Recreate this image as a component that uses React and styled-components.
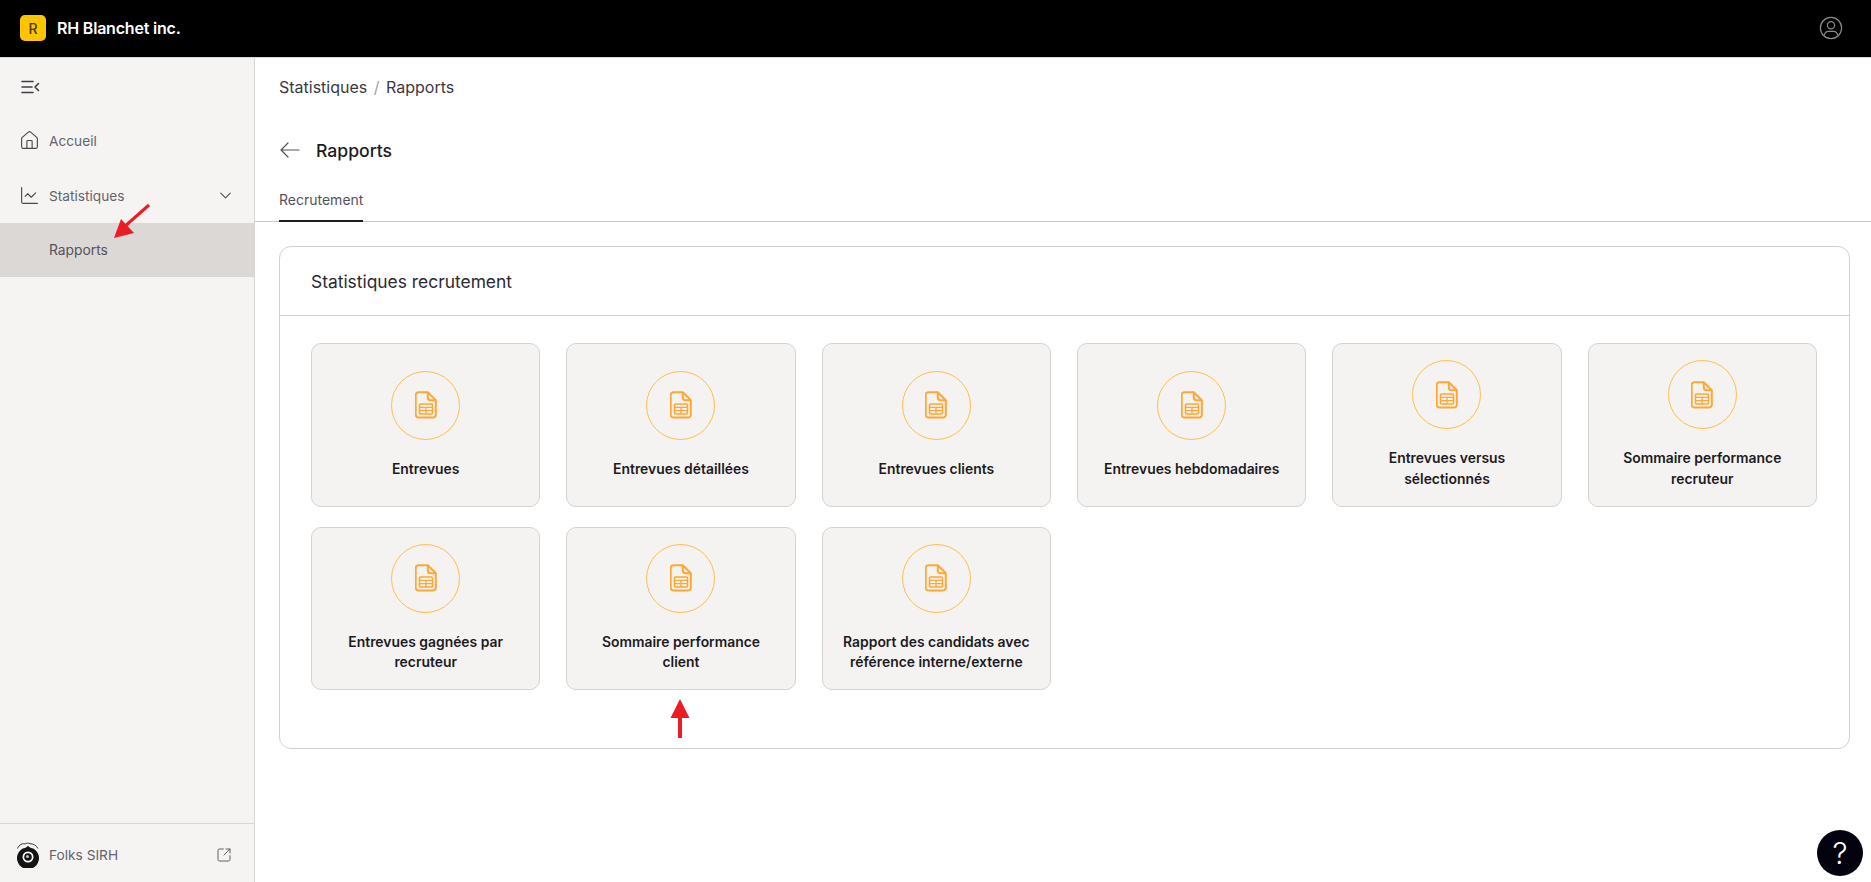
import React from "react";
import styled, { createGlobalStyle } from "styled-components";
import { House, ChartLine, ChevronDown, SquareArrowOutUpRight } from "lucide-react";

const Global = createGlobalStyle`
  html, body { margin: 0; padding: 0; height: 100%; background: #fff; }
  body { font-family: Inter, "Liberation Sans", sans-serif; color: #1d1b22; overflow: hidden; }
  * { box-sizing: border-box; }
`;
const Shell = styled.div`position: relative; display: flex; flex-direction: column; width: 1871px; height: 882px;`;
const TopBar = styled.header`
  height: 58px; flex: none; background: #000; border-bottom: 1px solid #d9d6d3;
  display: flex; align-items: center; justify-content: space-between; padding: 0 28px 1px 20px;
`;
const Brand = styled.div`display: flex; align-items: center; gap: 11px; color: #fff; font-size: 16px; font-weight: 600; letter-spacing: -0.2px;`;
const BrandMark = styled.div`
  width: 26px; height: 26px; border-radius: 5px; background: #fdc400; color: #4d3b00;
  display: flex; align-items: center; justify-content: center; font-size: 14px; font-weight: 500;
`;
const Body = styled.div`flex: 1; display: flex; min-height: 0;`;
const Sidebar = styled.aside`
  width: 255px; flex: none; background: #f5f4f2; border-right: 1px solid #d9d6d3;
  display: flex; flex-direction: column;
`;
const Collapse = styled.div`height: 55px; padding: 22px 0 0 21px; color: #3f3d44; svg { display: block; }`;
const NavList = styled.nav`flex: 1; display: flex; flex-direction: column;`;
const NavItem = styled.div`
  height: 55px; display: flex; align-items: center; padding: 0 19px 0 19px; gap: 9px;
  font-size: 13.7px; color: #66636b; svg { flex: none; }
`;
const NavLabel = styled.span`flex: 1;`;
const SubItem = styled.div`
  height: 54px; background: #dcd8d5; display: flex; align-items: center;
  padding-left: 49px; font-size: 13.8px; color: #55525a;
`;
const Foot = styled.div`
  height: 59px; flex: none; border-top: 1px solid #d9d6d3; display: flex; align-items: center;
  padding: 4px 22px 0 16px; gap: 9px; font-size: 13.7px; color: #66636b;
`;
const Main = styled.main`flex: 1; min-width: 0; display: flex; flex-direction: column;`;
const Crumbs = styled.div`
  height: 57px; flex: none; padding: 0 0 0 24px; display: flex; align-items: center; gap: 6.5px;
  font-size: 16px; color: #3b3940;
`;
const CrumbSep = styled.span`color: #a5a2a8;`;
const TitleRow = styled.div`
  height: 68px; flex: none; padding: 2px 24px 0 25px; display: flex; align-items: center; gap: 16px;
  font-size: 17.6px; font-weight: 500; color: #1d1b22; svg { flex: none; }
`;
const Tabs = styled.div`height: 39px; flex: none; padding: 0 24px; border-bottom: 1px solid #c9c6c4; display: flex;`;
const Tab = styled.div`
  height: 39px; display: flex; align-items: center; font-size: 14px; color: #55525a;
  border-bottom: 2px solid #1d1b22; padding-bottom: 4px;
`;
const Content = styled.div`padding: 24px 21px 0 24px;`;
const Panel = styled.section`border: 1px solid #d3d0ce; border-radius: 12px; background: #fff; height: 503px;`;
const PanelHead = styled.div`
  height: 69px; padding: 0 31px; display: flex; align-items: center; border-bottom: 1px solid #d3d0ce;
  font-size: 17.4px; color: #2b2a33;
`;
const Grid = styled.div`
  padding: 27px 32px 0 31px; display: grid; grid-template-columns: repeat(6, 1fr);
  grid-auto-rows: 163.5px; column-gap: 26px; row-gap: 20px;
`;
const Card = styled.div`
  background: #f5f3f2; border: 1px solid #d6d2cf; border-radius: 10px; padding: 0 20px;
  display: flex; flex-direction: column; align-items: center; justify-content: center; text-align: center;
`;
const Badge = styled.div`
  width: 69px; height: 69px; flex: none; border-radius: 50%; border: 1.7px solid #ffbd4d;
  display: flex; align-items: center; justify-content: center; color: #ffa733;
`;
const CardLabel = styled.div`margin-top: 19px; font-size: 13.9px; line-height: 20.5px; font-weight: 600; color: #1d1b22;`;
const HelpButton = styled.button`
  position: absolute; right: 8px; bottom: 6px; width: 46px; height: 46px; border: 0; border-radius: 50%;
  background: #03030f; color: #fff; display: flex; align-items: center; justify-content: center; padding: 0;
  font-family: Inter, sans-serif; font-size: 30px; font-weight: 300;
`;
const Annotation = styled.svg`position: absolute; pointer-events: none; overflow: visible;`;

const reports = [
  "Entrevues", "Entrevues détaillées", "Entrevues clients", "Entrevues hebdomadaires",
  "Entrevues versus sélectionnés", "Sommaire performance recruteur", "Entrevues gagnées par recruteur",
  "Sommaire performance client", "Rapport des candidats avec référence interne/externe",
];

const SheetIcon = () => (
  <svg width="22" height="28" viewBox="0 0 22 28" fill="none" stroke="currentColor" strokeWidth="2" strokeLinejoin="round">
    <path d="M3.500 1.200h9.300l8 8v14.600a2.800 2.800 0 0 1-2.800 2.800H3.500a2.800 2.800 0 0 1-2.800-2.800V4a2.800 2.800 0 0 1 2.800-2.800z" />
    <path d="M12.800 1.200v5.400a2.600 2.600 0 0 0 2.600 2.600h5.400" />
    <rect x="4.500" y="13" width="13" height="10" rx="1" strokeWidth="1.600" />
    <path d="M4.500 16.300h13M4.500 19.700h13M11 16.300v6.700" strokeWidth="1.300" />
  </svg>
);
const MenuCollapse = () => (
  <svg width="19" height="14" viewBox="0 0 19 14" fill="none" stroke="currentColor" strokeWidth="1.600" strokeLinecap="round" strokeLinejoin="round">
    <path d="M1 1.500h11M1 7h10M1 12.500h11M17.500 3.500 14 7l3.500 3.500" />
  </svg>
);
const UserIcon = () => (
  <svg width="24" height="24" viewBox="0 0 24 24" fill="none" stroke="#8b8b8b" strokeWidth="1.200">
    <circle cx="12" cy="12" r="10.600" />
    <circle cx="12" cy="9.200" r="3.600" />
    <path d="M5.200 19.500c.6-3 2.400-4.200 4.300-4.200h5c1.900 0 3.700 1.200 4.300 4.200" />
  </svg>
);
const FolksLogo = () => (
  <svg width="24" height="26" viewBox="0 0 24 26" fill="none">
    <path d="M1.500 6.500C3 2.500 7 1 9 2c1.500-1 3.500-1.200 5-.2 3-.3 6.500 1.700 8 4.700" stroke="#3a3a3a" strokeWidth="1" />
    <path d="M12 3.800c1.500 1.700 3.500 2.700 5.300 2.700a11 11 0 1 1-10.600 0C8.500 6.500 10.500 5.500 12 3.800z" fill="#141414" />
    <circle cx="12" cy="15" r="5.500" fill="#fff" />
    <circle cx="12" cy="15" r="3.800" fill="#141414" />
    <circle cx="11.500" cy="14.500" r="1.600" fill="#bbb" />
  </svg>
);

export default function App() {
  return (
    <Shell>
      <Global />
      <TopBar>
        <Brand><BrandMark>R</BrandMark>RH Blanchet inc.</Brand>
        <UserIcon />
      </TopBar>
      <Body>
        <Sidebar>
          <Collapse><MenuCollapse /></Collapse>
          <NavList>
            <NavItem><House size={21} strokeWidth={1.3} color="#4a484f" /><NavLabel>Accueil</NavLabel></NavItem>
            <NavItem><ChartLine size={21} strokeWidth={1.3} color="#4a484f" /><NavLabel>Statistiques</NavLabel><ChevronDown size={19} strokeWidth={1.3} color="#4a484f" /></NavItem>
            <SubItem>Rapports</SubItem>
          </NavList>
          <Foot><FolksLogo /><NavLabel>Folks SIRH</NavLabel><SquareArrowOutUpRight size={16} strokeWidth={1.4} color="#55525a" /></Foot>
        </Sidebar>
        <Main>
          <Crumbs>Statistiques<CrumbSep>/</CrumbSep>Rapports</Crumbs>
          <TitleRow>
            <svg width="20" height="16" viewBox="0 0 20 16" fill="none" stroke="#55525a" strokeWidth="1.2" strokeLinecap="round" strokeLinejoin="round"><path d="M1 8h18M8 1 1 8l7 7" /></svg>
            Rapports
          </TitleRow>
          <Tabs><Tab>Recrutement</Tab></Tabs>
          <Content>
            <Panel>
              <PanelHead>Statistiques recrutement</PanelHead>
              <Grid>
                {reports.map((r) => (
                  <Card key={r}>
                    <Badge><SheetIcon /></Badge>
                    <CardLabel>{r}</CardLabel>
                  </Card>
                ))}
              </Grid>
            </Panel>
          </Content>
        </Main>
      </Body>
      <HelpButton>?</HelpButton>
      <Annotation style={{ left: 112, top: 203 }} width="40" height="36" viewBox="0 0 40 36">
        <path d="M37 2 12 24" stroke="#ec1c24" strokeWidth="3" />
        <path d="M2 35 9 16 22 30z" fill="#ec1c24" />
      </Annotation>
      <Annotation style={{ left: 669, top: 699 }} width="22" height="40" viewBox="0 0 22 40">
        <path d="M11 16V39" stroke="#ec1c24" strokeWidth="4" />
        <path d="M11 0 20.500 19H1.500z" fill="#ec1c24" />
      </Annotation>
    </Shell>
  );
}
